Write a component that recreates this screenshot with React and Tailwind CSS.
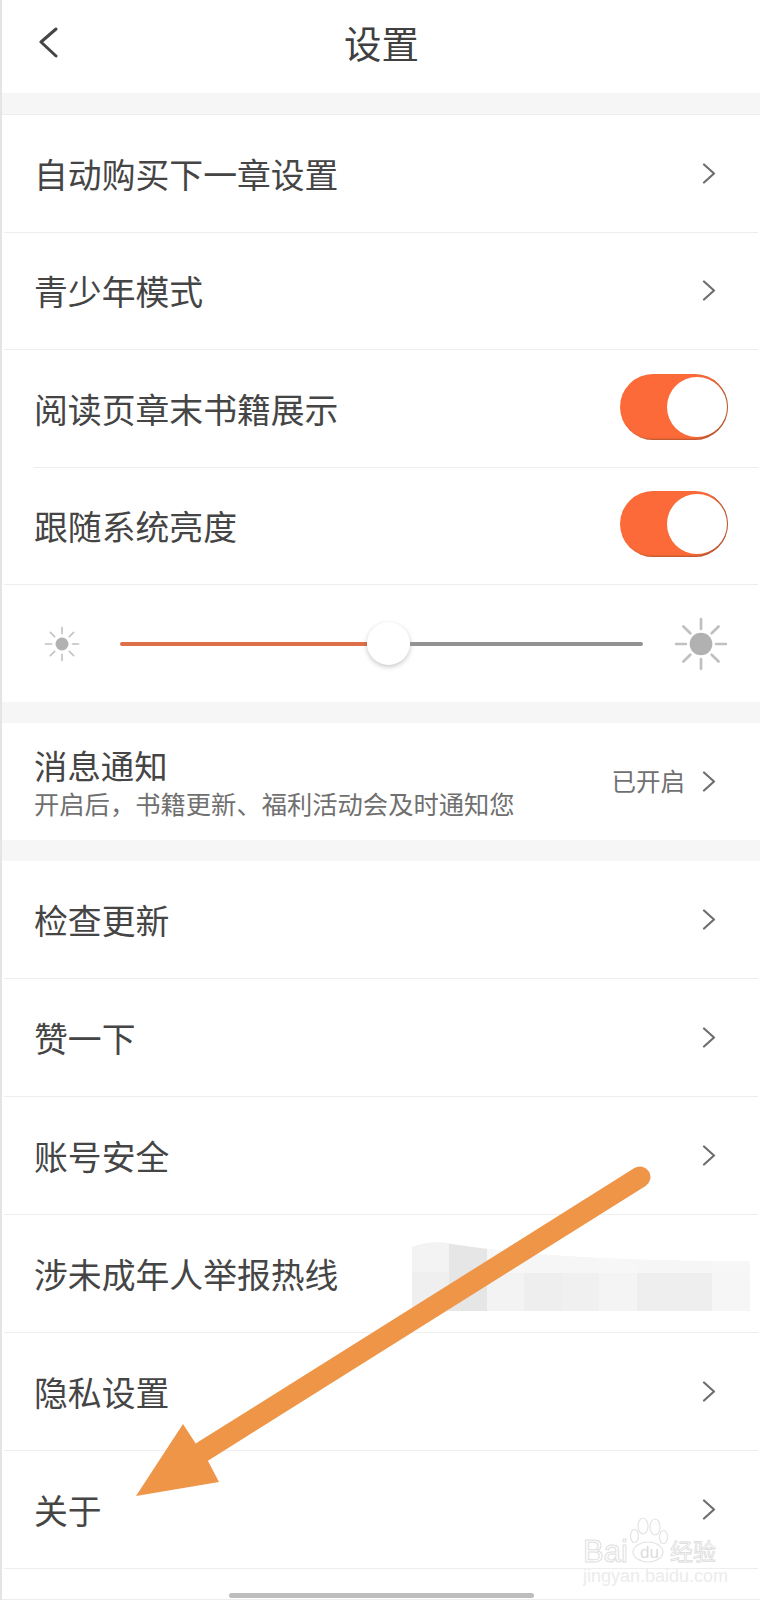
const Chevron = ({ className = "" }) => (
  <svg width="14" height="21" viewBox="0 0 14 21" fill="none" className={`shrink-0 ${className}`}>
    <path d="M2 1.5 L12 10.5 L2 19.5" stroke="#6e6e6e" strokeWidth="2.2" strokeLinecap="round" strokeLinejoin="round" />
  </svg>
);

const Toggle = () => (
  <div className="w-[108px] h-[66px] mb-[3px] rounded-full bg-[#fb6a38] flex items-center justify-end pr-[1px] shadow-[inset_-2px_-1px_2px_rgba(120,70,40,0.55)]">
    <div className="w-[60px] h-[60px] rounded-full bg-white" />
  </div>
);

const Sun = ({ size, core, ray, inner }) => {
  const rays = [0, 45, 90, 135, 180, 225, 270, 315];
  return (
    <svg width={size} height={size} viewBox="0 0 100 100" className="shrink-0">
      <circle cx="50" cy="50" r={core} fill="#b1b1b1" />
      {rays.map((a) => (
        <line key={a} x1="50" y1="4" x2="50" y2={inner} stroke="#c0c0c0" strokeWidth={ray} strokeLinecap="round" transform={`rotate(${a} 50 50)`} />
      ))}
    </svg>
  );
};

const Row = ({ label, inset, tall, children }) => (
  <div className={`${tall ? "h-[118px]" : "h-[117.5px]"} flex items-center justify-between border-b border-[#eeeeee] mr-[2px] ${inset ? "ml-[34px] pr-[30px]" : "ml-[4px] pl-[30px] pr-[30px]"}`}>
    <span className="text-[33.85px] leading-none text-[#454545] mt-[1px]">{label}</span>
    {children || <Chevron className="mr-[12px]" />}
  </div>
);

const Band = () => <div className="h-[21px] bg-[#f6f6f6]" />;

const cells = [
  ["#efefef", 0],
  ["#e6e6e6", 37],
  ["#f3f3f3", 75],
  ["#eeeeee", 112],
  ["#f0f0f0", 150],
  ["#f4f4f4", 187],
  ["#eeeeee", 225],
  ["#eeeeee", 262],
  ["#f6f6f6", 300],
];

const Blur = () => (
  <svg width="338" height="70" viewBox="0 0 338 70" className="absolute left-[412px] top-[1242px]">
    <defs>
      <clipPath id="patch">
        <path d="M0 5 Q20 -2 40 2 Q90 10 150 14 Q240 20 338 19 L338 69 L0 69 Z" />
      </clipPath>
    </defs>
    <g clipPath="url(#patch)">
      {cells.map(([c, x]) => (
        <rect key={x} x={x} y="0" width="38" height="70" fill={c} />
      ))}
      <rect x="75" y="0" width="263" height="31" fill="#f8f8f8" opacity="0.8" />
      <rect x="0" y="0" width="37" height="30" fill="#f4f4f4" opacity="0.8" />
    </g>
  </svg>
);

const Arrow = () => (
  <svg width="760" height="1600" viewBox="0 0 760 1600" className="absolute left-0 top-0 pointer-events-none">
    <line x1="202" y1="1452" x2="640" y2="1177" stroke="#ee9548" strokeWidth="21" strokeLinecap="round" />
    <polygon points="136,1496 183,1424 196,1444 208,1461 219,1482" fill="#ee9548" />
  </svg>
);

const Watermark = () => (
  <div className="absolute left-[583px] top-[1516px] w-[138px] pointer-events-none">
    <svg width="44" height="50" viewBox="0 0 44 50" fill="none" stroke="#e4e4e4" strokeWidth="1.2" className="absolute left-[46px] top-0">
      <ellipse cx="5.5" cy="20" rx="4" ry="6.5" />
      <ellipse cx="14" cy="10" rx="5" ry="8" />
      <ellipse cx="26" cy="11" rx="5" ry="8" />
      <ellipse cx="34.5" cy="21" rx="4" ry="6.5" />
      <ellipse cx="19" cy="36" rx="15" ry="10" />
    </svg>
    <div className="flex items-end h-[51px] leading-none [font-family:'Liberation_Sans',sans-serif]">
      <span className="w-[49px] text-[31px] text-white [-webkit-text-stroke:1px_#e0e0e0]">Bai</span>
      <span className="w-[38px] pl-[8px] text-[17px] mb-[6px] text-[#dcdcdc]">du</span>
      <span className="text-[23px] mb-[5px] text-white [-webkit-text-stroke:0.8px_#dcdcdc] [font-family:'Noto_Sans_CJK_SC',sans-serif] whitespace-nowrap">经验</span>
    </div>
    <div className="text-[18px] leading-none text-[#ececec] whitespace-nowrap [font-family:'Liberation_Sans',sans-serif]">jingyan.baidu.com</div>
  </div>
);

export default function App() {
  return (
    <div className="relative w-[760px] h-[1600px] bg-white border-l-2 border-[#e4e4e4] overflow-hidden [font-family:'Noto_Sans_CJK_SC',sans-serif]">
      <div className="ml-[-2px] w-[760px]">
        <header className="h-[93px] flex items-center justify-between pl-[37px] pr-[38px]">
          <svg width="22" height="32" viewBox="0 0 22 32" fill="none" className="mt-[-8px]">
            <path d="M19 2 L4 15 L19 29" stroke="#454545" strokeWidth="3" strokeLinecap="round" strokeLinejoin="round" />
          </svg>
          <h1 className="text-[37.5px] leading-none text-[#404040] font-normal mt-[-10px] mr-[303px] whitespace-nowrap">设置</h1>
        </header>
        <div className="h-[22px] bg-[#f6f6f6] border-b border-[#ededed]" />

        <Row label="自动购买下一章设置" />
        <Row label="青少年模式" />
        <Row label="阅读页章末书籍展示" inset>
          <Toggle />
        </Row>
        <Row label="跟随系统亮度">
          <Toggle />
        </Row>

        <div className="h-[117px] flex items-center pl-[44px] pr-[32px]">
          <Sun size={36} core={18} ray={4.5} inner={21} />
          <div className="flex-1 flex items-center ml-[40px] mr-[31px]">
            <div className="w-[247px] h-[4px] rounded-l-full bg-[#dd7048]" />
            <div className="w-[43px] h-[43px] rounded-full bg-white shadow-[0_2px_5px_rgba(0,0,0,0.22)] shrink-0" />
            <div className="flex-1 h-[4px] rounded-r-full bg-[#939393]" />
          </div>
          <Sun size={54} core={21} ray={5} inner={22} />
        </div>

        <Band />

        <div className="h-[117px] flex items-center justify-between pl-[34px] pr-[44px]">
          <div className="flex flex-col mb-[-1px]">
            <span className="text-[33.4px] leading-[40px] text-[#454545] mt-[-2px]">消息通知</span>
            <span className="text-[25.3px] leading-[30px] text-[#707070] whitespace-nowrap mt-[3px]">开启后，书籍更新、福利活动会及时通知您</span>
          </div>
          <div className="flex items-center gap-[17px]">
            <span className="text-[24.5px] leading-none text-[#707070]">已开启</span>
            <Chevron />
          </div>
        </div>

        <Band />

        <Row tall label="检查更新" />
        <Row tall label="赞一下" />
        <Row tall label="账号安全" />
        <Row tall label="涉未成年人举报热线">
          <span />
        </Row>
        <Row tall label="隐私设置" />
        <Row tall label="关于" />

        <div className="h-[31px] flex flex-col items-center justify-end">
          <div className="w-[305px] h-[5px] rounded-full bg-[#bdbdbd] ml-[2px] mb-[1px]" />
          <div className="w-full h-px bg-[#eeeeee]" />
        </div>
      </div>

      <div className="absolute left-[-2px] top-0 w-[760px] h-[1600px]">
        <Blur />
        <Arrow />
        <Watermark />
      </div>
    </div>
  );
}
